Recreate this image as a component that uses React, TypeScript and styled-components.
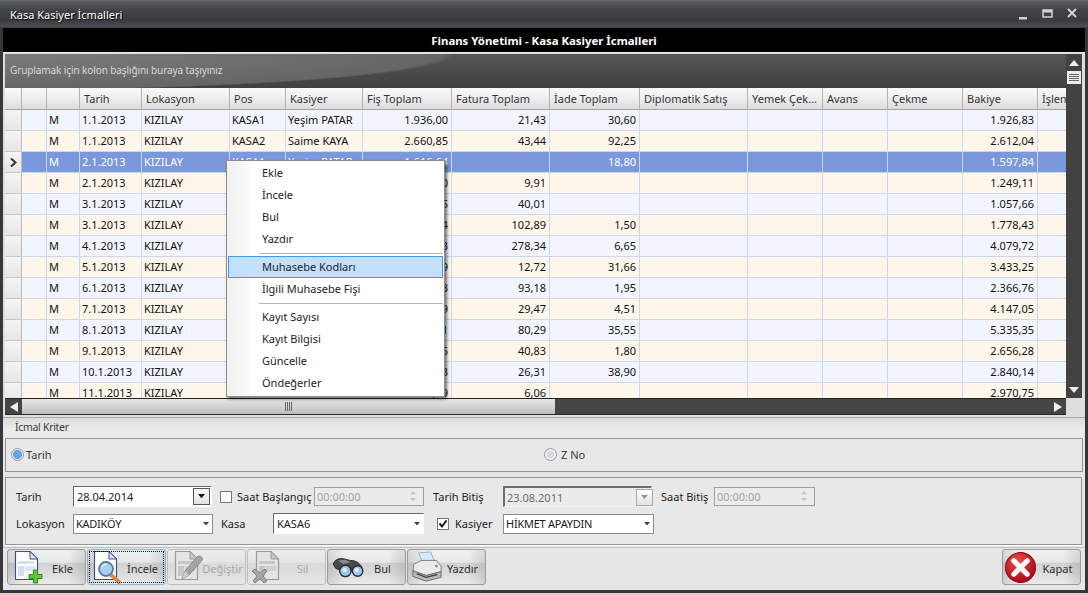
import React from "react";
import styled, { createGlobalStyle, css } from "styled-components";

const Global = createGlobalStyle`
  html, body { margin: 0; padding: 0; background: #2f3033; overflow: hidden; }
  * { box-sizing: border-box; }
  #root { font-family: "Noto Sans", "DejaVu Sans", sans-serif; font-size: 11px; color: #1c1c1c; }
`;

const Window = styled.div`
  position: relative; width: 1088px; height: 593px; display: flex; flex-direction: column;
  background: #36373a; padding: 0 3px 3px; overflow: hidden;
`;
const TitleBar = styled.div`
  height: 28px; margin: 0 -3px; padding: 0 6px 0 10px; display: flex; align-items: center; justify-content: space-between;
  background: linear-gradient(#6c6d70 0, #55565a 2px, #55565a 3px, #424347 10px, #3a3b3f 20px, #4d4e52 27px, #2a2a2c 28px);
`;
const TitleText = styled.div` color: #fff; font-size: 11px; text-shadow: 1px 1px 1px #000; `;
const WinButtons = styled.div` display: flex; align-items: center; `;
const Banner = styled.div`
  height: 24px; background: #000; color: #fff; font-weight: 700; display: flex; align-items: center; justify-content: center; font-size: 11.4px;
`;
const Panel = styled.div` flex: 1; min-height: 0; display: flex; flex-direction: column; background: #e6e6e6; `;
const GridArea = styled.div`
  height: 365px; flex: none; display: grid; grid-template-columns: 1fr 16px; padding: 1px 3px 0 2px; background: #dedede; border-top: 1px solid #e8e8e8;
`;
const GridMain = styled.div` min-width: 0; height: 361px; display: flex; flex-direction: column; overflow: hidden; `;
const GroupBar = styled.div`
  height: 34px; flex: none; padding: 0 0 2px 5px; display: flex; align-items: center; color: #d8d8d8; font-size: 10px; letter-spacing: -0.1px;
  background: radial-gradient(ellipse 450px 36px at 0 0, #7c7c7c 0, #656565 97%, rgba(101, 101, 101, 0) 100%), linear-gradient(#565656, #404040);
`;
const cols = "17px 25px 33px 62px 88px 56px 77px 89px 98px 90px 108px 75px 65px 75px 75px 75px";
const HeaderRow = styled.div`
  height: 22px; flex: none; display: grid; grid-template-columns: ${cols};
  background: linear-gradient(#fafafa, #ececec 55%, #dcdcdc); border-bottom: 1px solid #a5a5a5;
`;
const HeaderCell = styled.div`
  border-right: 1px solid #b2b2b2; padding: 0 0 0 4px; line-height: 21px; white-space: nowrap; overflow: hidden; color: #333;
`;
const Rows = styled.div` flex: 1; min-height: 0; overflow: hidden; border-bottom: 1px solid #222; `;
const Row = styled.div<{ $kind: "odd" | "even" | "sel" }>`
  height: 21px; display: grid; grid-template-columns: ${cols}; border-bottom: 1px solid #cbd8ea;
  background: ${(p) => (p.$kind === "odd" ? "#f3f5fe" : p.$kind === "even" ? "#fff6eb" : "#7b98dc")};
  color: ${(p) => (p.$kind === "sel" ? "#fff" : "#111")};
`;
const Cell = styled.div<{ $right?: boolean }>`
  border-right: 1px solid #cbd8ea; padding: 0 3px 0 2px; line-height: 20px; white-space: nowrap; overflow: hidden;
  text-align: ${(p) => (p.$right ? "right" : "left")};
`;
const Indicator = styled.div`
  background: linear-gradient(#f4f4f4, #e6e6e6); border-right: 1px solid #bcbcbc; display: flex; align-items: center; justify-content: center;
  box-shadow: 0 1px 0 #c8c8c8;
`;
const HScroll = styled.div`
  height: 16px; flex: none; display: flex; background: #454545; border-bottom: 1px solid #2a2a2a;
`;
const ScrollBtn = styled.div` width: 17px; flex: none; display: flex; align-items: center; justify-content: center; `;
const HThumb = styled.div`
  width: 533px; display: flex; align-items: center; justify-content: center;
  background: linear-gradient(#e6e6e6, #d0d0d0 60%, #bdbdbd);
`;
const VScroll = styled.div` height: 344px; background: #424242; display: flex; flex-direction: column; `;
const VBtn = styled.div` height: 17px; flex: none; display: flex; align-items: center; justify-content: center; `;
const VThumb = styled.div`
  height: 13px; flex: none; margin: 0 1px; background: #ececec; display: flex; align-items: center; justify-content: center;
`;
const VSpacer = styled.div` flex: 1; `;
const Section = styled.div`
  height: 21px; flex: none; padding: 0 0 2px 12px; display: flex; align-items: center; color: #3a3a3a; font-size: 10.5px; letter-spacing: -0.3px;
  background: linear-gradient(#dcdcdc, #ececec 60%, #e8e8e8); border-top: 1px solid #a8a8a8;
`;
const Box = styled.div` border: 1px solid #949494; background: #e8e8e8; margin: 0 2px; `;
const RadioBox = styled(Box)`
  height: 34px; flex: none; display: grid; grid-template-columns: 533px 1fr; align-items: center; padding: 0 0 2px 5px;
`;
const RadioOpt = styled.div<{ $gap: number }>` display: flex; align-items: center; gap: ${(p) => p.$gap}px; color: #3a3a3a; `;
const FilterBox = styled(Box)`
  height: 68px; flex: none; margin-top: 5px; margin-right: 3px; padding: 7px 0 0 10px; display: flex; flex-direction: column; gap: 4px; box-shadow: 0 1px 0 #fff;
`;
const FilterRow = styled.div` display: flex; align-items: center; height: 23px; `;
const Label = styled.div<{ $w: number; $pl?: number }>`
  width: ${(p) => p.$w}px; padding-left: ${(p) => p.$pl ?? 0}px; flex: none; white-space: nowrap; color: #222;
`;
const Field = styled.div<{ $w: number; $kind: "sunken" | "flat" | "time" | "off" }>`
  width: ${(p) => p.$w}px; height: 20px; flex: none; display: flex; align-items: center; justify-content: space-between; white-space: nowrap; padding: 0 3px;
  ${(p) => p.$kind === "sunken" && css`background: #fff; border: 1px solid #fff; border-top-color: #666; border-left-color: #666; height: 21px;`}
  ${(p) => p.$kind === "flat" && css`background: #fff; border: 1px solid #8d8d8d; height: 20px; padding-left: 2px; letter-spacing: -0.25px;`}
  ${(p) => p.$kind === "time" && css`background: #ececec; border: 1px solid #9e9e9e; color: #a2a2a2; height: 19px; padding: 0 2px;`}
  ${(p) => p.$kind === "off" && css`background: #ececec; border: 1px solid #f4f4f4; border-top: 2px solid #6d6d6d; border-left: 2px solid #6d6d6d; color: #6c6c6c; height: 21px; padding: 0 0 0 2px;`}
`;
const DropBtn = styled.div<{ $off?: boolean }>`
  width: 17px; height: 17px; flex: none; margin-right: -2px; display: flex; align-items: center; justify-content: center;
  border: 1px solid ${(p) => (p.$off ? "#a8a8a8" : "#555")}; background: linear-gradient(#fff, #e2e2e2);
`;
const Check = styled.div<{ $ml: number }>`
  width: 12px; height: 12px; margin-left: ${(p) => p.$ml}px; flex: none; background: #fff; border: 1px solid #777; display: flex; align-items: center; justify-content: center;
`;
const Spin = styled.div` display: flex; flex-direction: column; gap: 3px; margin-right: 5px; `;
const ButtonBar = styled.div`
  flex: 1; min-height: 0; display: flex; align-items: flex-start; justify-content: space-between; padding: 1px 4px 0 4px; margin-top: 2px; border-top: 1px solid #c2c2c2;
`;
const ButtonGroup = styled.div` display: flex; gap: 1px; `;
const ToolButton = styled.div<{ $focus?: boolean; $off?: boolean }>`
  width: 79px; height: 36px; display: grid; grid-template-columns: 32px 1fr; align-items: center; text-align: center;
  border: 1px solid ${(p) => (p.$focus ? "#8db6d4" : "#9c9c9c")}; border-radius: 3px;
  background: linear-gradient(90deg, rgba(0, 0, 0, 0.1), rgba(0, 0, 0, 0) 22%, rgba(0, 0, 0, 0) 78%, rgba(0, 0, 0, 0.1)),
    linear-gradient(#f0f0f0, #e8e8e8 35%, #d2d2d2 40%, #dcdcdc 70%, #ececec);
  color: ${(p) => (p.$off ? "#a8a8a8" : "#2c2c2c")};
  ${(p) => p.$off && css`border-color: #bdbdbd; background: linear-gradient(#ececec, #e6e6e6 35%, #dadada 40%, #dedede 70%, #e8e8e8);`}
  ${(p) => p.$focus && css`outline: 1px dotted #111; outline-offset: -3px;`}
  svg { flex: none; display: block; }
`;
const IconSlot = styled.div<{ $ml: number }>` margin-left: ${(p) => p.$ml}px; width: 0; display: flex; align-items: center; `;
const ButtonLabel = styled.span` white-space: nowrap; margin-top: 3px; `;
const Menu = styled.div`
  position: absolute; left: 226px; top: 160px; width: 219px; height: 237px; padding: 1px; background: linear-gradient(90deg, #f1f1f1 0, #fafafa 23px, #fff 24px);
  border: 1px solid #8c8c8c; box-shadow: 2px 2px 3px rgba(0, 0, 0, 0.55);
`;
const MenuItem = styled.div<{ $active?: boolean }>`
  height: 22px; padding: 0 0 2px 33px; display: flex; align-items: center; color: #222; border: 1px solid transparent;
  ${(p) => p.$active && css`background: #c2e0ff; border-color: #3d9bef;`}
`;
const MenuSep = styled.div`
  height: 6px; margin-left: 31px; display: flex; align-items: center;
  &::before { content: ""; display: block; width: 100%; height: 1px; background: #b5b5b5; }
`;

const Tri = ({ dir, color = "#eee", s = 5 }: { dir: "u" | "d" | "l" | "r"; color?: string; s?: number }) => {
  const pts = { u: "0,6 10,6 5,0", d: "0,0 10,0 5,6", l: "8,0 8,10 0,5", r: "0,0 0,10 8,5" }[dir];
  const vb = dir === "u" || dir === "d" ? "0 0 10 6" : "0 0 8 10";
  const w = dir === "u" || dir === "d" ? s * 2 : (s * 8) / 5;
  const h = dir === "u" || dir === "d" ? (s * 6) / 5 : s * 2;
  return <svg width={w} height={h} viewBox={vb}><polygon points={pts} fill={color} /></svg>;
};

const DocBase = ({ off }: { off?: boolean }) => {
  const line = off ? "#9a9a9a" : "#3a4f9a";
  return (
    <>
      <path d="M1.5 1.5H16L23.5 9V29.5H1.5Z" fill={off ? "#e4e4e4" : "#fff"} stroke={line} strokeWidth="1.2" />
      <path d="M16 1.5V9H23.5Z" fill={off ? "#c8c8c8" : "#dfe8f6"} stroke={line} strokeWidth="1" />
    </>
  );
};
const Stripes = ({ off }: { off?: boolean }) => (
  <>
    <rect x="4" y="11" width="16" height="3" fill={off ? "#c6c6c6" : "#cfe0f5"} />
    <rect x="4" y="16" width="6" height="10" fill={off ? "#c6c6c6" : "#cfe0f5"} />
    <rect x="11" y="16" width="10" height="5" fill={off ? "#cfcfcf" : "#dbe7f7"} />
  </>
);
const EkleIcon = () => (
  <svg width="30" height="34" viewBox="0 0 30 34">
    <DocBase /><Stripes />
    <path d="M19.500 20h4v4.500h4.500v4h-4.500v4.500h-4v-4.500h-4.500v-4h4.500z" fill="#62c63a" stroke="#2f8a20" strokeWidth="1" />
  </svg>
);
const InceleIcon = () => (
  <svg width="30" height="34" viewBox="0 0 30 34">
    <DocBase />
    <line x1="18" y1="25" x2="26" y2="32" stroke="#e8873a" strokeWidth="4" strokeLinecap="round" />
    <circle cx="13" cy="19" r="7" fill="#a9d0f2" stroke="#56799e" strokeWidth="1.8" />
    <path d="M9 17a5 4 0 0 1 5-3" stroke="#e8f4ff" strokeWidth="1.5" fill="none" />
  </svg>
);
const DegistirIcon = () => (
  <svg width="30" height="34" viewBox="0 0 30 34">
    <DocBase off /><Stripes off />
    <path d="M8 29l3-8L23 7c1.500-1.500 3-1.500 4.500 0s1 3 0 4L15 25z" fill="#a4a4a4" stroke="#8a8a8a" strokeWidth="1" />
    <path d="M8 29l3-8 4 4z" fill="#d0d0d0" />
  </svg>
);
const SilIcon = () => (
  <svg width="30" height="34" viewBox="0 0 30 34">
    <g transform="translate(4 0)"><DocBase off /><Stripes off /></g>
    <path d="M1 21l3-2 5 4 5-4 2 2-4 5 4 5-3 2-4-4-5 4-2-2 4-5z" fill="#a6a6a6" stroke="#808080" strokeWidth="1" />
  </svg>
);
const BulIcon = () => (
  <svg width="32" height="21" viewBox="0 0 36 24">
    <path d="M1 8C3 3 8 1 13 2l8 2c5 0 10 2 13 8l-2 6-12-2-6 1L4 13z" fill="#4a4a4a" stroke="#222" strokeWidth="1" />
    <path d="M6 4l9-1 6 3-8 2z" fill="#8b8b8b" />
    <circle cx="15" cy="16" r="6.500" fill="#9cc6ef" stroke="#2a2a2a" strokeWidth="1.5" />
    <circle cx="29" cy="16" r="6" fill="#9cc6ef" stroke="#2a2a2a" strokeWidth="1.5" />
    <circle cx="14" cy="15" r="2.500" fill="#e4f1ff" /><circle cx="28" cy="15" r="2.500" fill="#e4f1ff" />
  </svg>
);
const YazdirIcon = () => (
  <svg width="32" height="32" viewBox="0 0 34 32">
    <path d="M8 1l13-1 5 13H13z" fill="#d6ebff" stroke="#7aa" strokeWidth=".8" />
    <path d="M3 13l8-4h16l5 6v6L16 25 2 20z" fill="#eaeaea" stroke="#777" strokeWidth="1" />
    <path d="M2 20l14 5 16-4v6L16 31 2 26z" fill="#b9b9b9" stroke="#666" strokeWidth="1" />
    <path d="M6 23l10 4 12-3" stroke="#444" strokeWidth="1.5" fill="none" />
    <circle cx="27" cy="15" r="1.500" fill="#3bbf3b" />
  </svg>
);
const KapatIcon = () => (
  <svg width="31" height="31" viewBox="0 0 30 30">
    <defs>
      <radialGradient id="kr" cx=".4" cy=".3" r=".8"><stop offset="0" stopColor="#f04a4a" /><stop offset="1" stopColor="#a00010" /></radialGradient>
    </defs>
    <circle cx="15" cy="15" r="14.500" fill="url(#kr)" stroke="#8a0a10" strokeWidth="1" />
    <path d="M8.500 8.500l13 13M21.500 8.500l-13 13" stroke="#fff" strokeWidth="5" strokeLinecap="round" />
  </svg>
);

type RowData = [string, string, string, string, string, string, string, string];
const data: RowData[] = [
  ["1.1.2013", "KASA1", "Yeşim PATAR", "1.936,00", "21,43", "30,60", "1.926,83", "odd"],
  ["1.1.2013", "KASA2", "Saime KAYA", "2.660,85", "43,44", "92,25", "2.612,04", "even"],
  ["2.1.2013", "KASA1", "Yeşim PATAR", "1.616,64", "", "18,80", "1.597,84", "sel"],
  ["2.1.2013", "KASA2", "Saime KAYA", "1.239,20", "9,91", "", "1.249,11", "even"],
  ["3.1.2013", "KASA1", "Yeşim PATAR", "1.017,65", "40,01", "", "1.057,66", "odd"],
  ["3.1.2013", "KASA2", "Saime KAYA", "1.677,04", "102,89", "1,50", "1.778,43", "even"],
  ["4.1.2013", "KASA1", "Yeşim PATAR", "3.808,03", "278,34", "6,65", "4.079,72", "odd"],
  ["5.1.2013", "KASA2", "Saime KAYA", "3.452,19", "12,72", "31,66", "3.433,25", "even"],
  ["6.1.2013", "KASA1", "Yeşim PATAR", "2.275,53", "93,18", "1,95", "2.366,76", "odd"],
  ["7.1.2013", "KASA2", "Saime KAYA", "4.122,09", "29,47", "4,51", "4.147,05", "even"],
  ["8.1.2013", "KASA1", "Yeşim PATAR", "5.290,61", "80,29", "35,55", "5.335,35", "odd"],
  ["9.1.2013", "KASA2", "Saime KAYA", "2.617,25", "40,83", "1,80", "2.656,28", "even"],
  ["10.1.2013", "KASA1", "Yeşim PATAR", "2.852,73", "26,31", "38,90", "2.840,14", "odd"],
  ["11.1.2013", "KASA2", "Saime KAYA", "2.964,69", "6,06", "", "2.970,75", "even"],
];
const headers = ["", "", "", "Tarih", "Lokasyon", "Pos", "Kasiyer", "Fiş Toplam", "Fatura Toplam", "İade Toplam", "Diplomatik Satış", "Yemek Çek…", "Avans", "Çekme", "Bakiye", "İşlem"];

const Grip = () => (
  <svg width="8" height="9" viewBox="0 0 8 9">
    {[0.5, 2.5, 4.5, 6.5].map((x) => <line key={x} x1={x} y1="0" x2={x} y2="9" stroke="#666" />)}
  </svg>
);
const Radio = ({ on }: { on?: boolean }) => (
  <svg width="13" height="13" viewBox="0 0 13 13">
    <circle cx="6.500" cy="6.500" r="6" fill="#f2f2f2" stroke="#8f9aa6" />
    {on ? <circle cx="6.500" cy="6.500" r="4.200" fill="#62a9e6" stroke="#3f7fc0" strokeWidth=".6" /> : <circle cx="6.500" cy="6.500" r="3.800" fill="#dadada" />}
  </svg>
);
const Tick = () => (
  <svg width="10" height="10" viewBox="0 0 10 10"><path d="M1.500 4.500L4 7.500 8.500 1.500" stroke="#111" strokeWidth="2" fill="none" /></svg>
);
const SpinArrows = ({ c = "#c4c4c4" }: { c?: string }) => (
  <Spin><Tri dir="u" color={c} s={3} /><Tri dir="d" color={c} s={3} /></Spin>
);

export default function App() {
  return (
    <Window>
      <Global />
      <TitleBar>
        <TitleText>Kasa Kasiyer İcmalleri</TitleText>
        <WinButtons>
          <svg width="64" height="14" viewBox="0 0 64 14">
            <rect x="1" y="10" width="8" height="2.500" fill="#d4d4d4" />
            <rect x="25" y="3" width="9" height="7" fill="none" stroke="#d4d4d4" strokeWidth="1.500" />
            <rect x="25" y="3" width="9" height="2.500" fill="#d4d4d4" />
            <path d="M50 2l8 8M58 2l-8 8" stroke="#d4d4d4" strokeWidth="2" />
          </svg>
        </WinButtons>
      </TitleBar>
      <Banner>Finans Yönetimi - Kasa Kasiyer İcmalleri</Banner>
      <Panel>
        <GridArea>
          <GridMain>
            <GroupBar>Gruplamak için kolon başlığını buraya taşıyınız</GroupBar>
            <HeaderRow>
              {headers.map((h, i) => <HeaderCell key={i}>{h}</HeaderCell>)}
            </HeaderRow>
            <Rows>
              {data.map((r, i) => (
                <Row key={i} $kind={r[7] as "odd" | "even" | "sel"}>
                  <Indicator>
                    {r[7] === "sel" && (
                      <svg width="7" height="9" viewBox="0 0 7 9"><path d="M1 0.500L5.500 4.500 1 8.500" stroke="#333" strokeWidth="2" fill="none" /></svg>
                    )}
                  </Indicator>
                  <Cell />
                  <Cell>M</Cell>
                  <Cell>{r[0]}</Cell>
                  <Cell>KIZILAY</Cell>
                  <Cell>{r[1]}</Cell>
                  <Cell>{r[2]}</Cell>
                  <Cell $right>{r[3]}</Cell>
                  <Cell $right>{r[4]}</Cell>
                  <Cell $right>{r[5]}</Cell>
                  <Cell /><Cell /><Cell /><Cell />
                  <Cell $right>{r[6]}</Cell>
                  <Cell />
                </Row>
              ))}
            </Rows>
            <HScroll>
              <ScrollBtn><Tri dir="l" /></ScrollBtn>
              <HThumb><Grip /></HThumb>
              <VSpacer />
              <ScrollBtn><Tri dir="r" /></ScrollBtn>
            </HScroll>
          </GridMain>
          <VScroll>
            <VBtn><Tri dir="u" /></VBtn>
            <VThumb>
              <svg width="10" height="7" viewBox="0 0 10 7">
                {[0.5, 2.5, 4.5, 6.5].map((y) => <line key={y} x1="0" y1={y} x2="10" y2={y} stroke="#666" />)}
              </svg>
            </VThumb>
            <VSpacer />
            <VBtn><Tri dir="d" /></VBtn>
          </VScroll>
        </GridArea>
        <Section>İcmal Kriter</Section>
        <RadioBox>
          <RadioOpt $gap={2}><Radio on />Tarih</RadioOpt>
          <RadioOpt $gap={4}><Radio />Z No</RadioOpt>
        </RadioBox>
        <FilterBox>
          <FilterRow>
            <Label $w={57}>Tarih</Label>
            <Field $w={139} $kind="sunken">28.04.2014<DropBtn><Tri dir="d" color="#111" s={3.5} /></DropBtn></Field>
            <Check $ml={8} />
            <Label $w={82} $pl={5}>Saat Başlangıç</Label>
            <Field $w={110} $kind="time">00:00:00<SpinArrows /></Field>
            <Label $w={79} $pl={9}>Tarih Bitiş</Label>
            <Field $w={149} $kind="off">23.08.2011<DropBtn $off><Tri dir="d" color="#999" s={3.5} /></DropBtn></Field>
            <Label $w={62} $pl={9}>Saat Bitiş</Label>
            <Field $w={101} $kind="time">00:00:00<SpinArrows /></Field>
          </FilterRow>
          <FilterRow>
            <Label $w={57}>Lokasyon</Label>
            <Field $w={140} $kind="flat">KADIKÖY<Tri dir="d" color="#444" s={3} /></Field>
            <Label $w={60} $pl={8}>Kasa</Label>
            <Field $w={151} $kind="sunken">KASA6<Tri dir="d" color="#444" s={3} /></Field>
            <Check $ml={13}><Tick /></Check>
            <Label $w={54} $pl={6}>Kasiyer</Label>
            <Field $w={151} $kind="flat">HİKMET APAYDIN<Tri dir="d" color="#444" s={3} /></Field>
          </FilterRow>
        </FilterBox>
        <ButtonBar>
          <ButtonGroup>
            <ToolButton><IconSlot $ml={6}><EkleIcon /></IconSlot><ButtonLabel>Ekle</ButtonLabel></ToolButton>
            <ToolButton $focus><IconSlot $ml={5}><InceleIcon /></IconSlot><ButtonLabel>İncele</ButtonLabel></ToolButton>
            <ToolButton $off><IconSlot $ml={6}><DegistirIcon /></IconSlot><ButtonLabel>Değiştir</ButtonLabel></ToolButton>
            <ToolButton $off><IconSlot $ml={3}><SilIcon /></IconSlot><ButtonLabel>Sil</ButtonLabel></ToolButton>
            <ToolButton><IconSlot $ml={4}><BulIcon /></IconSlot><ButtonLabel>Bul</ButtonLabel></ToolButton>
            <ToolButton><IconSlot $ml={3}><YazdirIcon /></IconSlot><ButtonLabel>Yazdır</ButtonLabel></ToolButton>
          </ButtonGroup>
          <ToolButton><IconSlot $ml={2}><KapatIcon /></IconSlot><ButtonLabel>Kapat</ButtonLabel></ToolButton>
        </ButtonBar>
      </Panel>
      <Menu>
        {["Ekle", "İncele", "Bul", "Yazdır"].map((t) => <MenuItem key={t}>{t}</MenuItem>)}
        <MenuSep />
        <MenuItem $active>Muhasebe Kodları</MenuItem>
        <MenuItem>İlgili Muhasebe Fişi</MenuItem>
        <MenuSep />
        {["Kayıt Sayısı", "Kayıt Bilgisi", "Güncelle", "Öndeğerler"].map((t) => <MenuItem key={t}>{t}</MenuItem>)}
      </Menu>
    </Window>
  );
}
